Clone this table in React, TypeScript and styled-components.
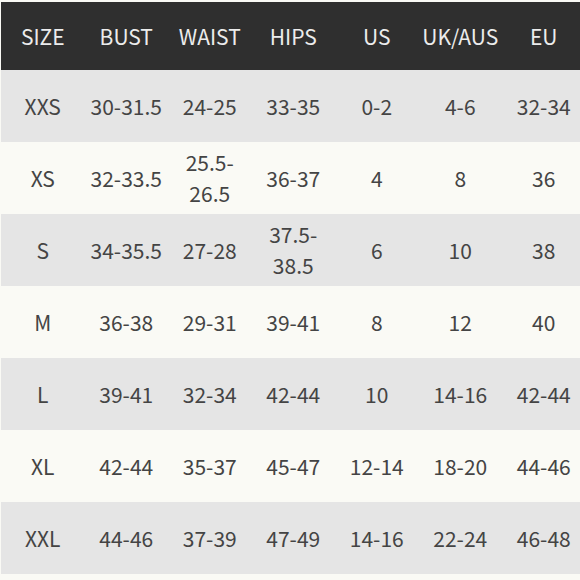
import { FC } from 'react'
import styled, { createGlobalStyle } from 'styled-components'

const GlobalStyle = createGlobalStyle`
  html, body {
    margin: 0;
    padding: 0;
    background: #f4f4f0;
    overflow: hidden;
  }
`

const Page = styled.div`
  width: 580px;
  height: 580px;
  padding: 2px 0 0 1px;
  box-sizing: border-box;
  background: #fafaf5;
  overflow: hidden;
  font-family: "Noto Sans CJK SC", "Noto Sans", sans-serif;
`

const Table = styled.div`
  display: grid;
  grid-template-columns: repeat(7, 83.5px);
  width: 584.5px;
`

const Row = styled.div<{ $kind: 'head' | 'gray' | 'light' }>`
  display: contents;

  & > div {
    height: ${p => (p.$kind === 'head' ? '68px' : '72px')};
    background: ${p =>
      p.$kind === 'head' ? '#2f2f2f' : p.$kind === 'gray' ? '#e5e5e5' : '#fafaf5'};
    color: ${p => (p.$kind === 'head' ? '#ececec' : '#444444')};
  }
`

const Cell = styled.div`
  display: flex;
  align-items: center;
  justify-content: center;
  text-align: center;
  font-size: 21px;
  line-height: 31px;
  padding: 0 2px;
  box-sizing: border-box;
`

const headers = ['SIZE', 'BUST', 'WAIST', 'HIPS', 'US', 'UK/AUS', 'EU']

const rows = [
  ['XXS', '30-31.5', '24-25', '33-35', '0-2', '4-6', '32-34'],
  ['XS', '32-33.5', '25.5-26.5', '36-37', '4', '8', '36'],
  ['S', '34-35.5', '27-28', '37.5-38.5', '6', '10', '38'],
  ['M', '36-38', '29-31', '39-41', '8', '12', '40'],
  ['L', '39-41', '32-34', '42-44', '10', '14-16', '42-44'],
  ['XL', '42-44', '35-37', '45-47', '12-14', '18-20', '44-46'],
  ['XXL', '44-46', '37-39', '47-49', '14-16', '22-24', '46-48'],
]

const App: FC = () => {
  return (
    <Page>
      <GlobalStyle />
      <Table>
        <Row $kind="head">
          {headers.map(h => (
            <Cell key={h}>{h}</Cell>
          ))}
        </Row>
        {rows.map((r, i) => (
          <Row key={r[0]} $kind={i % 2 === 0 ? 'gray' : 'light'}>
            {r.map((v, j) => (
              <Cell key={j}>{v}</Cell>
            ))}
          </Row>
        ))}
      </Table>
    </Page>
  )
}

export default App
